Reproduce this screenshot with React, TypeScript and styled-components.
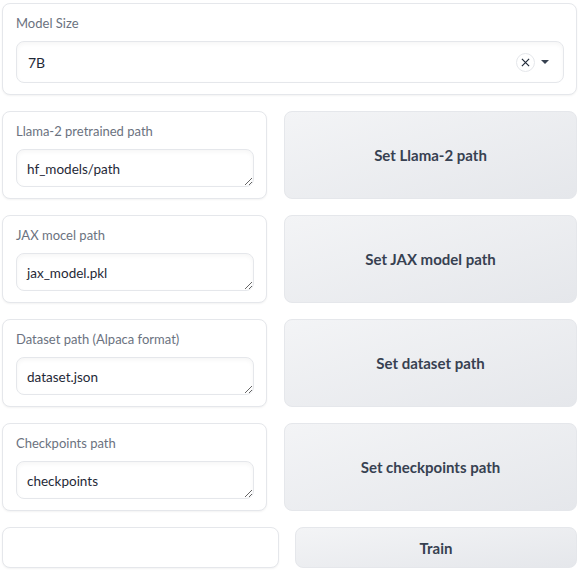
import React from 'react';
import styled, { createGlobalStyle } from 'styled-components';

const GlobalStyle = createGlobalStyle`
  html, body {
    margin: 0;
    padding: 0;
    background: #ffffff;
  }
  body {
    font-family: 'Lato', 'Noto Sans', sans-serif;
    color: #1f2937;
  }
`;

const Page = styled.div`
  display: flex;
  flex-direction: column;
  gap: 16px;
  padding: 3px 2px 2px 2px;
  width: 579px;
  box-sizing: border-box;
`;

const Block = styled.div<{ $width?: number; $height?: number }>`
  box-sizing: border-box;
  ${(p) => (p.$width ? `width: ${p.$width}px; flex: none;` : 'flex: 1;')}
  ${(p) => (p.$height ? `height: ${p.$height}px;` : '')}
  background: #ffffff;
  border: 1px solid #e5e7eb;
  border-radius: 8px;
  box-shadow: rgba(0, 0, 0, 0.05) 0 1px 2px 0;
  padding: 9px 12px 11px 13px;
  display: flex;
  flex-direction: column;
  gap: 8px;
`;

const Label = styled.span`
  font-size: 13px;
  color: #6b7280;
  line-height: 20px;
  height: 20px;
`;

const DropdownBox = styled.div`
  box-sizing: border-box;
  height: 42px;
  border: 1px solid #e5e7eb;
  border-radius: 8px;
  box-shadow: rgba(0, 0, 0, 0.04) 0 2px 4px 0 inset;
  display: flex;
  align-items: center;
  padding: 0 14px 0 11px;
  font-size: 14px;
  color: #1f2937;
`;

const DropdownValue = styled.span`
  flex: 1;
`;

const ClearButton = styled.span`
  width: 17px;
  height: 17px;
  border-radius: 50%;
  border: 1px solid #e5e7eb;
  display: flex;
  align-items: center;
  justify-content: center;
  margin-right: 6px;
`;

const Caret = styled.span`
  width: 0;
  height: 0;
  border-left: 4px solid transparent;
  border-right: 4px solid transparent;
  border-top: 4px solid #374151;
`;

const PathInput = styled.textarea`
  box-sizing: border-box;
  width: 100%;
  height: 38px;
  min-height: 38px;
  border: 1px solid #e5e7eb;
  border-radius: 8px;
  box-shadow: rgba(0, 0, 0, 0.04) 0 2px 4px 0 inset;
  padding: 9px 10px;
  font-family: inherit;
  font-size: 13.5px;
  line-height: 20px;
  color: #1f2937;
  resize: vertical;
  outline: none;
  display: block;
`;

const Row = styled.div`
  display: flex;
  gap: 17px;
  height: 88px;
`;

const BottomRow = styled.div`
  display: flex;
  gap: 16px;
  height: 41px;
`;

const SecondaryButton = styled.button`
  flex: 1;
  box-sizing: border-box;
  border: 1px solid #e5e7eb;
  border-radius: 8px;
  background: linear-gradient(to bottom right, #f3f4f6, #e5e7eb);
  color: #374151;
  font-family: inherit;
  font-weight: 700;
  font-size: 15px;
  cursor: pointer;
`;

const fields = [
  { label: 'Llama-2 pretrained path', value: 'hf_models/path', button: 'Set Llama-2 path' },
  { label: 'JAX mocel path', value: 'jax_model.pkl', button: 'Set JAX model path' },
  { label: 'Dataset path (Alpaca format)', value: 'dataset.json', button: 'Set dataset path' },
  { label: 'Checkpoints path', value: 'checkpoints', button: 'Set checkpoints path' },
];

export default function App() {
  return (
    <>
      <GlobalStyle />
      <Page>
        <Block $height={92}>
          <Label>Model Size</Label>
          <DropdownBox>
            <DropdownValue>7B</DropdownValue>
            <ClearButton>
              <svg width="9" height="9" viewBox="0 0 10 10">
                <path d="M1 1 L9 9 M9 1 L1 9" stroke="#1f2937" strokeWidth="1.3" />
              </svg>
            </ClearButton>
            <Caret />
          </DropdownBox>
        </Block>
        {fields.map((f) => (
          <Row key={f.label}>
            <Block $width={265}>
              <Label>{f.label}</Label>
              <PathInput defaultValue={f.value} rows={1} />
            </Block>
            <SecondaryButton>{f.button}</SecondaryButton>
          </Row>
        ))}
        <BottomRow>
          <Block $width={277} />
          <SecondaryButton>Train</SecondaryButton>
        </BottomRow>
      </Page>
    </>
  );
}
